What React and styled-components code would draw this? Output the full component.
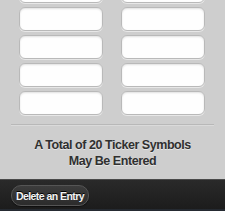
import React from "react";
import styled, { createGlobalStyle } from "styled-components";

const Global = createGlobalStyle`
  html, body { margin: 0; padding: 0; background: #cecece; }
  body { width: 225px; height: 211px; overflow: hidden; font-family: "Liberation Sans", Arial, sans-serif; }
`;

const Page = styled.div`
  width: 225px;
  height: 211px;
  display: flex;
  flex-direction: column;
  overflow: hidden;
  background: #cecece;
`;

const Fields = styled.div`
  display: grid;
  grid-template-columns: 84px 84px;
  column-gap: 18px;
  row-gap: 4px;
  padding: 0 20px 0 19px;
  margin-top: -21px;
`;

const Field = styled.div`
  height: 24px;
  box-sizing: border-box;
  background: #fefefe;
  border: 1px solid #b9b9b9;
  border-radius: 6px;
  box-shadow: inset 0 1px 2px rgba(0, 0, 0, 0.12), 0 1px 0 rgba(255, 255, 255, 0.5);
`;

const Separator = styled.div`
  margin: 9px 11px 0 11px;
  height: 1px;
  background: #b8b8b8;
  border-bottom: 1px solid #dadada;
`;

const Note = styled.div`
  margin-top: 11px;
  text-align: center;
  font-weight: bold;
  font-size: 12.5px;
  letter-spacing: -0.45px;
  line-height: 16px;
  color: #303030;
  text-shadow: 0 1px 0 rgba(255, 255, 255, 0.5);
`;

const Toolbar = styled.div`
  margin-top: auto;
  flex: 0 0 32px;
  box-sizing: border-box;
  padding: 5px 11px 0;
  background: linear-gradient(#2a2a2a, #1c1c1c);
  border-top: 1px solid #4a4a4a;
  border-bottom: 2px solid #252a31;
`;

const Button = styled.div`
  display: inline-flex;
  align-items: center;
  justify-content: center;
  width: 78px;
  height: 21px;
  box-sizing: border-box;
  border-radius: 10px;
  border: 1px solid #555;
  background: linear-gradient(#3c3c3c, #2c2c2c);
  box-shadow: 0 1px 1px rgba(0, 0, 0, 0.5);
  color: #f4f4f4;
  font-weight: bold;
  font-size: 10.5px;
  letter-spacing: -0.55px;
  white-space: nowrap;
  text-shadow: 0 -1px 0 #000;
`;

export default function App() {
  const rows = Array.from({ length: 10 });
  return (
    <Page>
      <Global />
      <Fields>
        {rows.map((_, i) => (
          <Field key={i} />
        ))}
      </Fields>
      <Separator />
      <Note>
        A Total of 20 Ticker Symbols
        <br />
        May Be Entered
      </Note>
      <Toolbar>
        <Button>Delete an Entry</Button>
      </Toolbar>
    </Page>
  );
}
